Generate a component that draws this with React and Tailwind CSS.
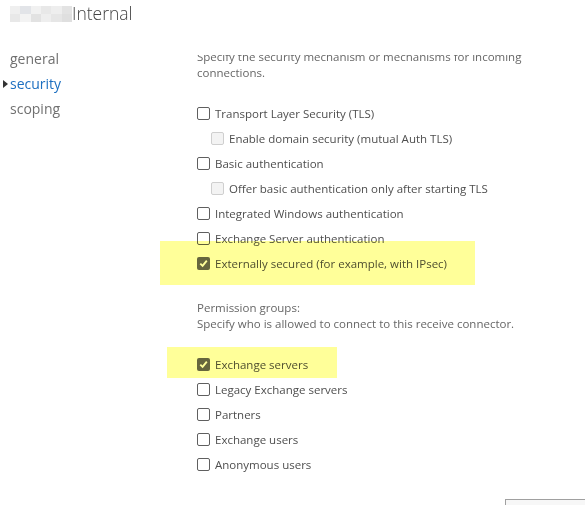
import React from 'react';

const FONT = { fontFamily: '"Open Sans", "Noto Sans", sans-serif' };

function Box({ checked, disabled }) {
  if (checked) {
    return (
      <span className="w-[13px] h-[13px] rounded-[2px] bg-[#666666] shrink-0 flex items-center justify-center">
        <svg width="9" height="9" viewBox="0 0 9 9">
          <path d="M1.3 4.6 L3.6 6.9 L7.8 1.6" fill="none" stroke="#ffffff" strokeWidth="1.9" />
        </svg>
      </span>
    );
  }
  return (
    <span
      className={`w-[13px] h-[13px] rounded-[2px] border shrink-0 ${
        disabled ? 'border-[#cfcfcf] bg-[#f3f3f3]' : 'border-[#5f5f5f] bg-white'
      }`}
    />
  );
}

function Row({ label, checked, disabled, indent }) {
  return (
    <div className={`flex items-center h-[25px] gap-[5px] ${indent ? 'pl-[14px]' : ''}`}>
      <Box checked={checked} disabled={disabled} />
      <span className="text-[11.5px] text-[#4e4e4e] leading-none">{label}</span>
    </div>
  );
}

export default function App() {
  return (
    <div className="relative w-[585px] h-[505px] overflow-hidden bg-white" style={FONT}>
      {/* Title */}
      <div className="flex items-center h-[28px] pl-[10px]">
        <div className="grid grid-cols-6 w-[62px] h-[16px] opacity-60">
          {['#e6e6e6', '#cfd3da', '#e9e9e9', '#d9d9d9', '#e4e4e4', '#d2d2d2',
            '#dadada', '#ececec', '#cfcfcf', '#e3e3e3', '#d6d6d6', '#cbcbcb'].map((c, i) => (
            <span key={i} style={{ background: c }} />
          ))}
        </div>
        <span className="text-[17.5px] font-light text-[#444444] leading-none">Internal</span>
      </div>

      <div className="flex">
        {/* Nav */}
        <div className="w-[197px] shrink-0 pt-[18px] text-[14px] leading-[25px]">
          <div className="pl-[10px] text-[#707070]">general</div>
          <div className="relative pl-[10px] text-[#1c6fc0]">
            <span className="absolute left-[3px] top-[9px] w-0 h-0 border-y-[4px] border-y-transparent border-l-[5px] border-l-[#333333]" />
            security
          </div>
          <div className="pl-[10px] text-[#707070]">scoping</div>
        </div>

        {/* Content */}
        <div className="relative flex-1 mt-[27px] h-[450px] overflow-hidden">
          <div className="-mt-[6px] text-[11.5px] text-[#666666] leading-[16px]">
            <p>Specify the security mechanism or mechanisms for incoming</p>
            <p>connections.</p>
          </div>

          <div className="mt-[20px]">
            <Row label="Transport Layer Security (TLS)" />
            <Row label="Enable domain security (mutual Auth TLS)" indent disabled />
            <Row label="Basic authentication" />
            <Row label="Offer basic authentication only after starting TLS" indent disabled />
            <Row label="Integrated Windows authentication" />
            <Row label="Exchange Server authentication" />
            <Row label="Externally secured (for example, with IPsec)" checked />
          </div>

          <div className="mt-[24px] text-[11.5px] text-[#666666] leading-[16px]">
            <p>Permission groups:</p>
            <p>Specify who is allowed to connect to this receive connector.</p>
          </div>

          <div className="mt-[20px]">
            <Row label="Exchange servers" checked />
            <Row label="Legacy Exchange servers" />
            <Row label="Partners" />
            <Row label="Exchange users" />
            <Row label="Anonymous users" />
          </div>
        </div>
      </div>

      {/* highlighter marks */}
      <div className="absolute left-[160px] top-[241px] w-[315px] h-[44px] bg-[#ffff99] mix-blend-multiply" />
      <div className="absolute left-[167px] top-[347px] w-[170px] h-[31px] bg-[#ffff99] mix-blend-multiply" />

      {/* partially visible button */}
      <div className="absolute left-[505px] top-[499px] w-[100px] h-[20px] border border-[#a0a0a0] bg-[#f7f7f7]" />
    </div>
  );
}
